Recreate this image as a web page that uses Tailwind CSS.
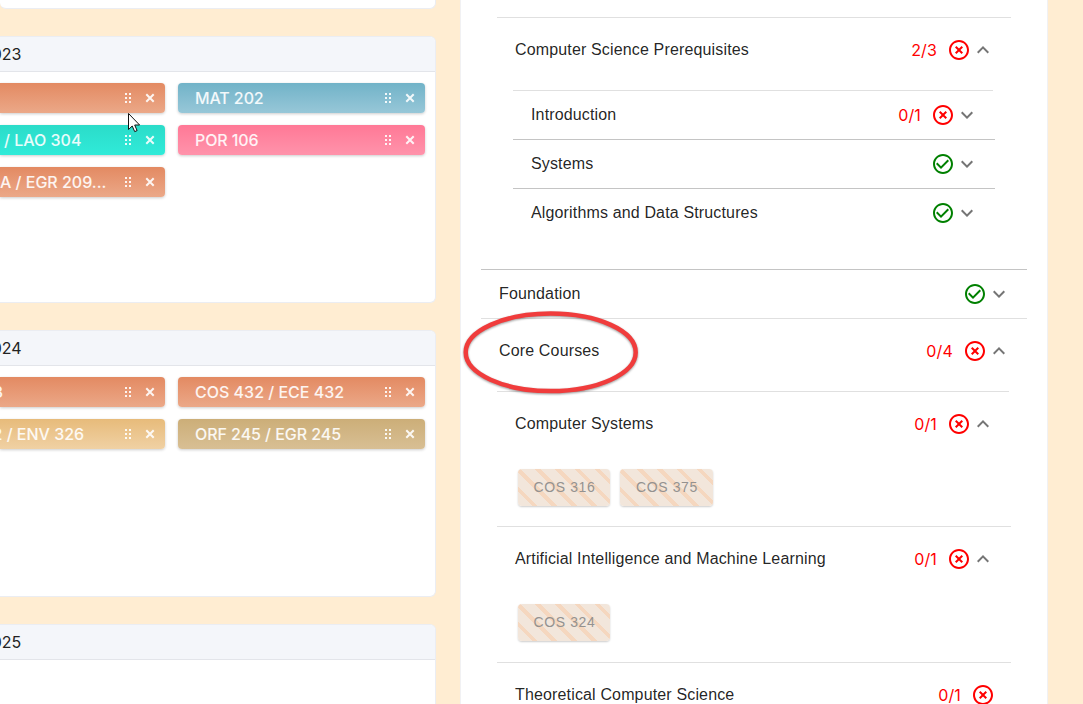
<!DOCTYPE html>
<html lang="en">
<head>
<meta charset="utf-8">
<title>Course planner</title>
<script src="https://cdn.jsdelivr.net/npm/@tailwindcss/browser@4"></script>
</head>
<body class="relative flex h-[704px] w-[1083px] overflow-hidden bg-[#ffedd2] font-['Inter',sans-serif] text-base leading-6">
<svg class="hidden">
  <symbol id="fail" viewBox="0 0 24 24"><path d="M14.59 8L12 10.59 9.41 8 8 9.41 10.59 12 8 14.59 9.41 16 12 13.41 14.59 16 16 14.59 13.41 12 16 9.41 14.59 8zM12 2C6.47 2 2 6.47 2 12s4.47 10 10 10 10-4.47 10-10S17.53 2 12 2zm0 18c-4.41 0-8-3.59-8-8s3.59-8 8-8 8 3.59 8 8-3.59 8-8 8z"/></symbol>
  <symbol id="pass" viewBox="0 0 24 24"><path d="M16.59 7.58 10 14.17l-3.59-3.58L5 12l5 5 8-8zM12 2C6.48 2 2 6.48 2 12s4.48 10 10 10 10-4.48 10-10S17.52 2 12 2m0 18c-4.42 0-8-3.58-8-8s3.58-8 8-8 8 3.58 8 8-3.58 8-8 8"/></symbol>
  <symbol id="less" viewBox="0 0 24 24"><path d="m12 8-6 6 1.41 1.41L12 10.83l4.59 4.58L18 14z"/></symbol>
  <symbol id="more" viewBox="0 0 24 24"><path d="M16.59 8.59 12 13.17 7.41 8.59 6 10l6 6 6-6z"/></symbol>
  <symbol id="tools" viewBox="0 0 32 10">
    <path d="M1 0h2v2H1zM5 0h2v2H5zM1 4h2v2H1zM5 4h2v2H5zM1 8h2v2H1zM5 8h2v2H5z"/>
    <path d="M22.3 1.3l7.4 7.4M29.7 1.3l-7.4 7.4" fill="none" stroke="currentColor" stroke-width="2"/>
  </symbol>
</svg>

<main class="flex h-[704px] w-[436px] shrink-0 flex-col gap-7 overflow-hidden">
  <section class="-mb-px h-[9px] shrink-0 rounded-b-md border-r border-b border-[#ebedf2] bg-white"></section>

  <section class="-mb-px h-[267px] shrink-0 overflow-hidden rounded-r-md border border-l-0 border-[#ebedf2] bg-white">
    <h2 class="flex h-[35px] items-center border-b border-[#e3e5ea] bg-[#f4f6fa] text-[#222]"><span class="-ml-[18px]">2023</span></h2>
    <div class="grid grid-cols-[165px_247px] gap-x-[13px] gap-y-3 pt-[11px] font-medium text-white/90">
      <div class="flex h-[30px] items-center justify-end rounded-r-[4px] bg-linear-to-b from-[#e38a62] to-[#eba888] pr-[9px] shadow-[0_1px_3px_#0003]"><svg class="h-2.5 w-8 fill-current"><use href="#tools"/></svg></div>
      <div class="flex h-[30px] items-center justify-between rounded-[4px] bg-linear-to-b from-[#71b3c8] to-[#97c7d8] pr-[9px] pl-[17px] shadow-[0_1px_3px_#0003]"><span class="-tracking-[0.1px]">MAT 202</span><svg class="h-2.5 w-8 fill-current"><use href="#tools"/></svg></div>
      <div class="flex h-[30px] items-center justify-between rounded-r-[4px] bg-linear-to-b from-[#2bdcc9] to-[#30ebd9] pr-[9px] pl-[4px] shadow-[0_1px_3px_#0003]"><span>/ LAO 304</span><svg class="h-2.5 w-8 fill-current"><use href="#tools"/></svg></div>
      <div class="flex h-[30px] items-center justify-between rounded-[4px] bg-linear-to-b from-[#ff7896] to-[#ff93ab] pr-[9px] pl-[17px] shadow-[0_1px_3px_#0003]"><span class="-tracking-[0.1px]">POR 106</span><svg class="h-2.5 w-8 fill-current"><use href="#tools"/></svg></div>
      <div class="flex h-[30px] items-center justify-between rounded-r-[4px] bg-linear-to-b from-[#e38a62] to-[#eba888] pr-[9px] shadow-[0_1px_3px_#0003]"><span class="-ml-[11px]">DA / EGR 209...</span><svg class="h-2.5 w-8 fill-current"><use href="#tools"/></svg></div>
    </div>
  </section>

  <section class="-mb-px h-[267px] shrink-0 overflow-hidden rounded-r-md border border-l-0 border-[#ebedf2] bg-white">
    <h2 class="flex h-[35px] items-center border-b border-[#e3e5ea] bg-[#f4f6fa] text-[#222]"><span class="-ml-[18px]">2024</span></h2>
    <div class="grid grid-cols-[165px_247px] gap-x-[13px] gap-y-3 pt-[11px] font-medium text-white/90">
      <div class="flex h-[30px] items-center justify-between rounded-r-[4px] bg-linear-to-b from-[#e38a62] to-[#eba888] pr-[9px] shadow-[0_1px_3px_#0003]"><span class="-ml-[7px]">3</span><svg class="h-2.5 w-8 fill-current"><use href="#tools"/></svg></div>
      <div class="flex h-[30px] items-center justify-between rounded-[4px] bg-linear-to-b from-[#e38a62] to-[#eba888] pr-[9px] pl-[17px] shadow-[0_1px_3px_#0003]"><span>COS 432 / ECE 432</span><svg class="h-2.5 w-8 fill-current"><use href="#tools"/></svg></div>
      <div class="flex h-[30px] items-center justify-between rounded-r-[4px] bg-linear-to-b from-[#e7bb7a] to-[#f0d1a4] pr-[9px] shadow-[0_1px_3px_#0003]"><span class="-ml-[7.5px]">2 / ENV 326</span><svg class="h-2.5 w-8 fill-current"><use href="#tools"/></svg></div>
      <div class="flex h-[30px] items-center justify-between rounded-[4px] bg-linear-to-b from-[#ccae78] to-[#d8bf94] pr-[9px] pl-[17px] shadow-[0_1px_3px_#0003]"><span class="-tracking-[0.06px]">ORF 245 / EGR 245</span><svg class="h-2.5 w-8 fill-current"><use href="#tools"/></svg></div>
    </div>
  </section>

  <section class="h-[80px] shrink-0 overflow-hidden rounded-tr-md border-t border-r border-[#ebedf2] bg-white">
    <h2 class="flex h-[35px] items-center border-b border-[#e3e5ea] bg-[#f4f6fa] text-[#222]"><span class="-ml-[18px]">2025</span></h2>
  </section>
</main>

<aside class="ml-[24px] flex h-[704px] w-[588px] shrink-0 flex-col overflow-hidden border-x border-[#f1f1f3] bg-white pt-[17px] pl-5 font-['Liberation_Sans',sans-serif] tracking-[0.15px] text-black/87">
  <div class="ml-4 h-[73px] w-[514px] shrink-0 border-t border-[#e0e0e0] pr-4 pl-[18px]">
    <div class="flex h-16 items-center"><span class="grow tracking-[0.15px]">Computer Science Prerequisites</span><span class="mr-2.5 font-['Inter'] text-[red]">2/3</span><svg class="size-6 fill-[red]"><use href="#fail"/></svg><svg class="size-6 fill-[#757575]"><use href="#less"/></svg></div>
  </div>
  <div class="ml-8 h-[49px] w-[480px] shrink-0 border-t border-[#e0e0e0] pr-[14px] pl-[18px]">
    <div class="flex h-12 items-center"><span class="grow">Introduction</span><span class="mr-2.5 font-['Inter'] text-[red]">0/1</span><svg class="size-6 fill-[red]"><use href="#fail"/></svg><svg class="size-6 fill-[#757575]"><use href="#more"/></svg></div>
  </div>
  <div class="ml-8 h-[49px] w-[482px] shrink-0 border-t border-[#c4c4c4] pr-4 pl-[18px]">
    <div class="flex h-12 items-center"><span class="grow">Systems</span><svg class="size-6 fill-[green]"><use href="#pass"/></svg><svg class="size-6 fill-[#757575]"><use href="#more"/></svg></div>
  </div>
  <div class="ml-8 h-[81px] w-[482px] shrink-0 border-t border-[#c4c4c4] pr-4 pl-[18px]">
    <div class="flex h-12 items-center"><span class="grow">Algorithms and Data Structures</span><svg class="size-6 fill-[green]"><use href="#pass"/></svg><svg class="size-6 fill-[#757575]"><use href="#more"/></svg></div>
  </div>
  <div class="h-[49px] w-[546px] shrink-0 border-t border-[#c4c4c4] pr-4 pl-[18px]">
    <div class="flex h-12 items-center"><span class="grow">Foundation</span><svg class="size-6 fill-[green]"><use href="#pass"/></svg><svg class="size-6 fill-[#757575]"><use href="#more"/></svg></div>
  </div>
  <div class="h-[73px] w-[546px] shrink-0 border-t border-[#e0e0e0] pr-4 pl-[18px]">
    <div class="flex h-16 items-center"><span class="grow">Core Courses</span><span class="mr-2.5 font-['Inter'] text-[red]">0/4</span><svg class="size-6 fill-[red]"><use href="#fail"/></svg><svg class="size-6 fill-[#757575]"><use href="#less"/></svg></div>
  </div>
  <div class="ml-4 h-[135px] w-[512px] shrink-0 border-t border-[#e0e0e0] pr-[14px] pl-[18px]">
    <div class="flex h-16 items-center"><span class="grow">Computer Systems</span><span class="mr-2.5 font-['Inter'] text-[red]">0/1</span><svg class="size-6 fill-[red]"><use href="#fail"/></svg><svg class="size-6 fill-[#757575]"><use href="#less"/></svg></div>
    <div class="ml-[3px] flex gap-2.5 pt-[13px] text-sm tracking-[0.6px] text-[#949290]">
      <span class="flex h-[37px] w-[92px] items-center justify-center rounded-[4px] bg-[repeating-linear-gradient(45deg,#f2e6db_0_10px,#f5d7bf_10px_14px)] pb-0.5 pl-px shadow-[0_1px_2px_#0003]">COS 316</span>
      <span class="flex h-[37px] w-[93px] items-center justify-center rounded-[4px] bg-[repeating-linear-gradient(45deg,#f2e6db_0_10px,#f5d7bf_10px_14px)] pb-0.5 pl-px shadow-[0_1px_2px_#0003]">COS 375</span>
    </div>
  </div>
  <div class="ml-4 h-[136px] w-[514px] shrink-0 border-t border-[#e0e0e0] pr-4 pl-[18px]">
    <div class="flex h-16 items-center"><span class="grow">Artificial Intelligence and Machine Learning</span><span class="mr-2.5 font-['Inter'] text-[red]">0/1</span><svg class="size-6 fill-[red]"><use href="#fail"/></svg><svg class="size-6 fill-[#757575]"><use href="#less"/></svg></div>
    <div class="ml-[3px] flex pt-[13px] text-sm tracking-[0.6px] text-[#949290]">
      <span class="flex h-[37px] w-[92px] items-center justify-center rounded-[4px] bg-[repeating-linear-gradient(45deg,#f2e6db_0_10px,#f5d7bf_10px_14px)] pb-0.5 pl-px shadow-[0_1px_2px_#0003]">COS 324</span>
    </div>
  </div>
  <div class="ml-4 h-[42px] w-[514px] shrink-0 border-t border-[#e0e0e0] pr-4 pl-[18px]">
    <div class="flex h-16 items-center"><span class="grow">Theoretical Computer Science</span><span class="mr-2.5 font-['Inter'] text-[red]">0/1</span><svg class="size-6 fill-[red]"><use href="#fail"/></svg></div>
  </div>
</aside>

<!-- highlight ring and mouse pointer float above the page -->
<svg class="absolute top-[308px] left-[460px] h-[90px] w-[182px] drop-shadow-[0_1px_1px_#0006]" fill="none"><ellipse cx="90.7" cy="44.3" rx="85" ry="38.8" stroke="#f03c3c" stroke-width="4.5"/></svg>
<svg class="absolute top-[113px] left-[128px] h-5 w-3" viewBox="0 0 12 20"><path d="M.5.5v16l3.7-3.5 2.5 5.6 2.4-1-2.4-5.6h4.9z" fill="#fff" stroke="#111" stroke-width="1"/></svg>
</body>
</html>
